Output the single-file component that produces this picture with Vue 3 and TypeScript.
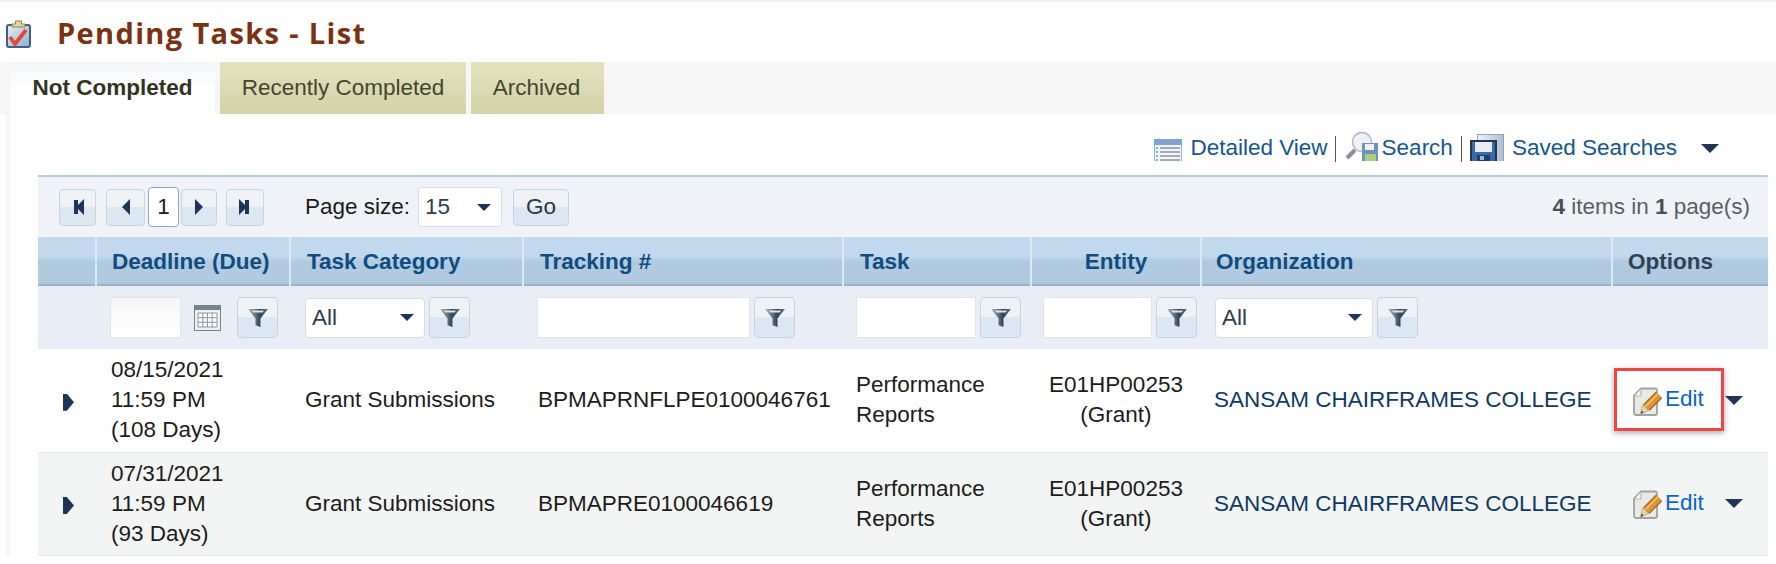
<script setup lang="ts">
interface Column { label: string; cls: string; width: number }
interface Filter { kind: 'date' | 'select' | 'text'; width: number; pad: number }
interface Row { date: string; time: string; days: string; tracking: string; marked: boolean }

const columns: Column[] = [
  { label: '', cls: '', width: 58 },
  { label: 'Deadline (Due)', cls: '', width: 194 },
  { label: 'Task Category', cls: '', width: 233 },
  { label: 'Tracking #', cls: '', width: 320 },
  { label: 'Task', cls: '', width: 188 },
  { label: 'Entity', cls: 'center', width: 170 },
  { label: 'Organization', cls: '', width: 411 },
  { label: 'Options', cls: 'opt', width: 156 },
]
const filters: Filter[] = [
  { kind: 'date', width: 71, pad: 14 },
  { kind: 'select', width: 120, pad: 15 },
  { kind: 'text', width: 213, pad: 14 },
  { kind: 'text', width: 120, pad: 13 },
  { kind: 'text', width: 109, pad: 12 },
  { kind: 'select', width: 158, pad: 14 },
]
const rows: Row[] = [
  { date: '08/15/2021', time: '11:59 PM', days: '(108 Days)', tracking: 'BPMAPRNFLPE0100046761', marked: true },
  { date: '07/31/2021', time: '11:59 PM', days: '(93 Days)', tracking: 'BPMAPRE0100046619', marked: false },
]
const tabs: string[] = ['Not Completed', 'Recently Completed', 'Archived']
</script>

<template>
  <div class="page">
    <div class="topline"></div>
    <header class="title">
      <svg class="title-icon" width="25" height="28" viewBox="0 0 25 28">
        <defs>
          <linearGradient id="clip" x1="0" x2="1" y1="0" y2="1">
            <stop offset="0" stop-color="#e9eff6" />
            <stop offset="1" stop-color="#8fadcf" />
          </linearGradient>
        </defs>
        <rect x="1" y="5" width="23" height="22" rx="2" fill="url(#clip)" stroke="#3f5f86" stroke-width="2" />
        <path d="M6 7V4h3.500V1h6v3H19v3z" fill="#e3d79a" stroke="#8d8250" />
        <path d="M4 17l5 7 11-14" fill="none" stroke="#e2492f" stroke-width="3.800" />
      </svg>
      <h1>Pending Tasks - List</h1>
    </header>

    <nav class="tabs">
      <div v-for="(t, i) in tabs" :key="t" class="tab" :class="{ active: i === 0 }">{{ t }}</div>
    </nav>

    <main class="panel">
      <div class="toolbar">
        <svg class="ic-list" width="28" height="22" viewBox="0 0 28 22">
          <rect x="0" y="0" width="28" height="22" fill="#f1f4f8" />
          <rect x="0" y="0" width="28" height="6" fill="#7fa3cf" />
          <path d="M0.500 6v16M27.500 6v16" stroke="#8fb0d8" />
          <path d="M6 9h20M6 13h20M6 17h20M6 21h20" stroke="#8a949e" stroke-width="1.600" />
          <path d="M2 9h2M2 13h2M2 17h2M2 21h2" stroke="#5c9be0" stroke-width="1.600" />
        </svg>
        <a class="tool-link">Detailed View</a>
        <i class="tool-sep first-sep"></i>
        <svg class="ic-search" width="35" height="29" viewBox="0 0 35 29">
          <circle cx="18" cy="10" r="9.500" fill="#eef2f6" stroke="#b3b9bf" stroke-width="1.600" />
          <path d="M11 18L3 26" stroke="#8a8f95" stroke-width="4" />
          <rect x="18" y="11" width="16" height="18" fill="#6f93bd" />
          <rect x="21" y="12" width="9" height="6" fill="#eef2f6" />
          <rect x="21" y="22" width="11" height="7" fill="#a9d17c" />
        </svg>
        <a class="tool-link tight">Search</a>
        <i class="tool-sep"></i>
        <svg class="ic-floppy" width="34" height="27" viewBox="0 0 34 27">
          <defs>
            <linearGradient id="sheet" x1="0" x2="1" y1="0" y2="0">
              <stop offset="0" stop-color="#eef2f6" />
              <stop offset="1" stop-color="#aebfd2" />
            </linearGradient>
          </defs>
          <rect x="7.500" y="0.500" width="26" height="27" fill="url(#sheet)" stroke="#93a5b8" />
          <rect x="1" y="7" width="25" height="21" fill="#3b6ba3" stroke="#1f3558" stroke-width="2" />
          <rect x="5" y="8" width="17" height="10" fill="#e9edf2" />
          <rect x="7" y="21" width="13" height="6" fill="#1f3f69" />
          <rect x="10" y="22" width="4" height="4" fill="#9fb9d8" />
        </svg>
        <a class="tool-link saved">Saved Searches</a>
        <span class="caret toolbar-caret"></span>
      </div>

      <div class="pager">
        <button class="pg-btn first"><span class="skip left"></span></button>
        <button class="pg-btn prev"><span class="tri left"></span></button>
        <span class="pg-current">1</span>
        <button class="pg-btn next"><span class="tri right"></span></button>
        <button class="pg-btn last"><span class="skip right"></span></button>
        <label class="size-label">Page size:</label>
        <div class="select size-select"><span>15</span><span class="caret small"></span></div>
        <button class="go">Go</button>
        <div class="count"><b>4</b> items in <b>1</b> page(s)</div>
      </div>

      <table class="grid">
        <colgroup>
          <col v-for="c in columns" :key="c.label" :style="{ width: c.width + 'px' }" />
        </colgroup>
        <thead>
          <tr class="head">
            <th v-for="c in columns" :key="c.label" :class="c.cls">{{ c.label }}</th>
          </tr>
          <tr class="filter">
            <th></th>
            <th v-for="(f, i) in filters" :key="i" :style="{ paddingLeft: f.pad + 'px' }">
              <div class="filter-cell">
                <div v-if="f.kind === 'select'" class="select" :style="{ width: f.width + 'px' }">
                  <span>All</span><span class="caret small"></span>
                </div>
                <div v-else class="input" :class="{ dateinput: f.kind === 'date' }" :style="{ width: f.width + 'px' }"></div>
                <svg v-if="f.kind === 'date'" class="cal" width="27" height="26" viewBox="0 0 27 26">
                  <rect x="0.500" y="0.500" width="26" height="25" fill="#eef1f4" stroke="#77838f" />
                  <rect x="1" y="1" width="25" height="4" fill="#77838f" />
                  <path d="M4 8h19v14H4zM4 12.700h19M4 17.300h19M8.800 8v14M13.500 8v14M18.200 8v14" fill="#fff" stroke="#8b96a1" />
                </svg>
                <button class="funnel">
                  <svg width="24" height="22" viewBox="0 0 24 22">
                    <defs>
                      <linearGradient id="fg" x1="0" x2="1" y1="0" y2="0">
                        <stop offset="0" stop-color="#b4bfca" />
                        <stop offset="0.6" stop-color="#2f4358" />
                        <stop offset="1" stop-color="#64778a" />
                      </linearGradient>
                    </defs>
                    <path d="M2 2h20l-7.500 9.500V20l-5-1.800v-6.700z" fill="url(#fg)" />
                    <path d="M6 3.500h12l-1.600 2H7.600z" fill="#e2e8ee" />
                  </svg>
                </button>
              </div>
            </th>
            <th></th>
          </tr>
        </thead>
        <tbody>
          <tr v-for="(r, i) in rows" :key="r.tracking" class="row" :class="{ alt: i % 2 === 1 }">
            <td class="expand"><span class="expander"></span></td>
            <td class="date">{{ r.date }}<br />{{ r.time }}<br />{{ r.days }}</td>
            <td class="cat">Grant Submissions</td>
            <td class="track">{{ r.tracking }}</td>
            <td class="task">Performance<br />Reports</td>
            <td class="center">E01HP00253<br />(Grant)</td>
            <td class="org">SANSAM CHAIRFRAMES COLLEGE</td>
            <td class="options">
              <div class="opt-wrap">
                <div class="edit" :class="{ marked: r.marked }">
                  <svg width="31" height="30" viewBox="0 0 31 30">
                    <path d="M9 1.500H23a2 2 0 0 1 2 2V26a2 2 0 0 1-2 2H4a2 2 0 0 1-2-2V8.500z" fill="#e9e9e5" stroke="#a2a2a0" stroke-width="1.800" />
                    <path d="M9 2v7H2.500" fill="#f6f6f4" stroke="#b8b8b4" stroke-width="1.200" />
                    <path d="M27 8L14.500 20.500" stroke="#8c5a1c" stroke-width="9" />
                    <path d="M27 8L14.500 20.500" stroke="#de9330" stroke-width="7" />
                    <path d="M26 7L13.500 19.500" stroke="#f0b860" stroke-width="1.800" />
                    <path d="M10.500 17.500l6 6-8 3.500z" fill="#e3d6a4" stroke="#9c8f62" stroke-width="0.600" />
                    <path d="M9.700 23.500l2 2-3 1.200z" fill="#4a4a48" />
                  </svg>
                  <a>Edit</a>
                </div>
                <span class="caret row-caret"></span>
              </div>
            </td>
          </tr>
        </tbody>
      </table>
    </main>
  </div>
</template>

<style scoped>
.page {
  width: 1776px;
  height: 564px;
  overflow: hidden;
  background: #fff;
  font-family: "Liberation Sans", Arial, sans-serif;
  font-size: 22.500px;
  color: #1c1c1c;
}
.topline { height: 2px; background: #eef2f6; }
.title {
  height: 60px;
  display: flex;
  align-items: center;
  padding: 0 0 0 6px;
  box-sizing: border-box;
}
.title-icon { flex: none; margin-top: 4px; }
.title h1 {
  margin: 0 0 0 26px;
  font-family: "Open Sans", "Noto Sans", sans-serif;
  font-size: 29px;
  font-weight: 700;
  letter-spacing: 1.350px;
  color: #7a3212;
}
.tabs {
  height: 52px;
  display: flex;
  background: #f6f6f6;
  padding-left: 10px;
  gap: 5px;
}
.tab {
  display: flex;
  align-items: center;
  box-sizing: border-box;
  justify-content: center;
  background: linear-gradient(#e2e2bf, #d3d2a8);
  color: #45452f;
}
.tab:nth-child(1) { width: 205px; }
.tab:nth-child(2) { width: 246px; }
.tab:nth-child(3) { width: 133px; padding-right: 2px; }
.tab.active {
  background: linear-gradient(#f3f4f7, #ffffff 50%);
  color: #33331f;
  font-weight: 700;
}
.panel {
  margin-left: 6px;
  border-left: 4px solid #f6f6f6;
  padding-left: 28px;
  padding-right: 8px;
}
.toolbar {
  height: 61px;
  display: flex;
  align-items: flex-start;
  box-sizing: border-box;
  padding-top: 19px;
  padding-right: 49px;
  justify-content: flex-end;
  color: #15568f;
}
.toolbar svg { flex: none; }
.ic-list { margin-top: 6px; }
.ic-search { margin-top: -1px; margin-right: 3px; }
.ic-floppy { margin-top: 1px; }
.tool-link { line-height: 30px; margin-left: 8px; color: #15568f; }
.tool-link.tight { margin-left: 0; }
.tool-sep {
  width: 1px;
  height: 26px;
  background: #555;
  margin: 3px 8px 0;
}
.first-sep { margin-left: 7px; }
.saved { margin-left: 8px; }
.caret {
  display: inline-block;
  width: 0;
  height: 0;
  border-left: 9px solid transparent;
  border-right: 9px solid transparent;
  border-top: 9px solid #1f3558;
}
.caret.small { border-left-width: 7px; border-right-width: 7px; border-top-width: 7px; }
.toolbar-caret { margin-left: 24px; margin-top: 11px; }
.pager {
  height: 62px;
  box-sizing: border-box;
  display: flex;
  align-items: center;
  background: #eff3f7;
  border-top: 2px solid #b9ccdb;
  padding-left: 21px;
  padding-right: 18px;
  color: #1a1a1a;
}
.pg-btn, .funnel, .go {
  border: 1px solid #c6d3e0;
  border-radius: 4px;
  background: linear-gradient(#eef2f6 50%, #dde7f2 50%);
  padding: 0;
  display: flex;
  align-items: center;
  justify-content: center;
  font: inherit;
  box-sizing: border-box;
}
.pg-btn { height: 37px; }
.first { width: 37px; }
.prev { width: 39px; margin-left: 10px; }
.next { width: 36px; margin-left: 2px; }
.last { width: 38px; margin-left: 9px; }
.pg-current {
  width: 31px;
  height: 40px;
  box-sizing: border-box;
  margin-left: 3px;
  background: #fff;
  border: 1.500px solid #8da6c0;
  border-radius: 4px;
  display: flex;
  align-items: center;
  justify-content: center;
}
.tri, .skip { display: inline-block; width: 0; height: 0; position: relative; }
.tri.left, .skip.left { border-right: 8px solid #1f3558; border-top: 8px solid transparent; border-bottom: 8px solid transparent; }
.tri.right, .skip.right { border-left: 8px solid #1f3558; border-top: 8px solid transparent; border-bottom: 8px solid transparent; }
.skip::before {
  content: "";
  position: absolute;
  top: -7px;
  width: 4px;
  height: 14px;
  background: #1f3558;
}
.skip.left::before { left: -2px; }
.skip.right::before { left: -2px; }
.skip.left { margin-left: 5px; }
.skip.right { margin-right: 5px; }
.size-label { margin-left: 41px; }
.select {
  height: 40px;
  box-sizing: border-box;
  background: #fff;
  border: 1px solid #d5dde6;
  border-radius: 4px;
  display: flex;
  align-items: center;
  justify-content: space-between;
  padding: 0 10px 0 6px;
  color: #303d4c;
  font-weight: 400;
}
.size-select { width: 84px; margin-left: 8px; }
.go { width: 56px; height: 37px; margin-left: 11px; color: #2a3a4a; }
.count { margin-left: auto; color: #5a5f64; }
.count b { color: #4a4f55; }
.grid {
  width: 1730px;
  table-layout: fixed;
  border-collapse: collapse;
}
.head th {
  height: 49px;
  padding: 0 0 0 16px;
  text-align: left;
  font-weight: 700;
  color: #0f4c81;
  background: linear-gradient(#c2d8ec 40%, #b0cadf 50%, #b0cadf 94%, #8fa8bc 100%);
  border-left: 2px solid #dce8f2;
}
.head th:first-child { border-left: 0; }
.head th:nth-child(2) { padding-left: 15px; }
.head th:nth-child(7) { padding-left: 14px; }
.head th:nth-child(8) { padding-left: 15px; }
.head th.center { text-align: center; padding-left: 0; }
.head th.opt { color: #2f4254; }
.filter th {
  height: 63px;
  padding: 0;
  background: #e9edf6;
  font-weight: 400;
}
.filter-cell { display: flex; align-items: center; gap: 4px; }
.input {
  height: 41px;
  box-sizing: border-box;
  background: #fff;
  border: 1px solid #e0e3e8;
}
.dateinput { background: linear-gradient(#f6f6f6, #fff); }
.cal { margin: 0 12px 0 9px; flex: none; }
.funnel { width: 41px; height: 41px; flex: none; }
.row td {
  height: 103px;
  padding: 0;
  box-sizing: border-box;
  line-height: 30px;
  background: #fff;
  border-bottom: 1px solid #e6e8e8;
  color: #1c1c1c;
}
.row.alt td { background: #f3f5f5; }
.row td.date { padding-left: 15px; }
.row td.cat { padding-left: 15px; }
.row td.track { padding-left: 15px; }
.row td.task { padding-left: 13px; }
.row td.center { text-align: center; }
.row td.org { padding-left: 13px; color: #0f3a63; }
.expander {
  display: block;
  width: 11px;
  height: 17px;
  margin: 4px 0 0 25px;
  background: #1f3558;
  clip-path: polygon(0 0, 35% 0, 100% 50%, 35% 100%, 0 100%);
}
.opt-wrap { display: flex; align-items: center; position: relative; padding-left: 20px; }
.edit { display: flex; align-items: center; gap: 2px; position: relative; color: #0a66c8; }
.edit svg { flex: none; margin-top: 3px; }
.edit a { margin-top: -2px; }
.edit.marked::after {
  content: "";
  position: absolute;
  left: -18px;
  top: -16px;
  width: 110px;
  height: 63px;
  box-sizing: border-box;
  border: 3px solid #f04545;
  box-shadow: 0 2px 6px rgba(0, 0, 0, 0.35);
}
.row-caret { margin-left: 21px; margin-top: 0; }
</style>
